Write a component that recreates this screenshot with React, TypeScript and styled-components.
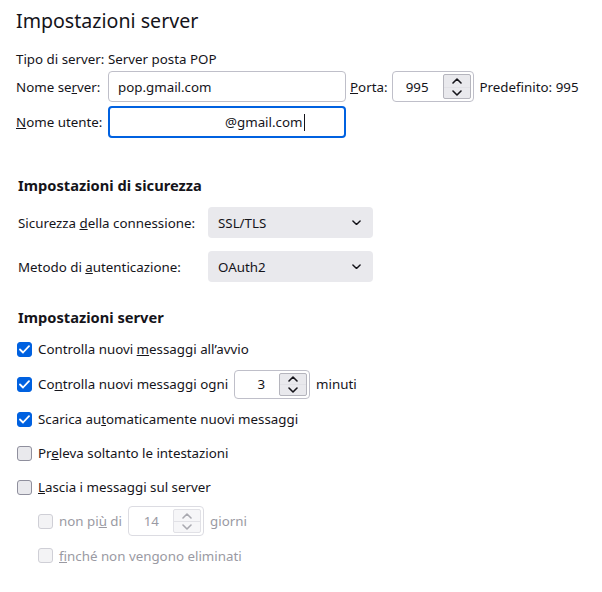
import React from 'react'
import styled, { createGlobalStyle, css } from 'styled-components'

const GlobalStyle = createGlobalStyle`
  html, body {
    margin: 0;
    padding: 0;
    background: #ffffff;
  }
  body {
    font-family: "Noto Sans", "Open Sans", sans-serif;
    font-size: 13.33px;
    color: #15141a;
  }
`

const Page = styled.div`
  padding: 6px 16px 20px 16px;
  width: 602px;
  box-sizing: border-box;
`

const Title = styled.h1`
  font-size: 19.6px;
  font-weight: 400;
  margin: 0 0 14px 0;
  line-height: 30px;
`

const InfoLine = styled.div`
  line-height: 19px;
  margin-bottom: 2px;
`

const ServerGrid = styled.div`
  display: grid;
  grid-template-columns: 92px 238px auto;
  row-gap: 4px;
  align-items: center;
`

const Label = styled.label`
  white-space: nowrap;
`

const TextBox = styled.div<{ $focused?: boolean }>`
  height: 31px;
  box-sizing: border-box;
  border: 1px solid #bfbfc9;
  border-radius: 4px;
  display: flex;
  align-items: center;
  padding: 0 9px;
  ${(p) =>
    p.$focused &&
    css`
      height: 32px;
      border: 2px solid #0061e0;
      padding: 0 8px;
    `}
`

const Hidden = styled.span`
  display: inline-block;
  width: 107px;
`

const Caret = styled.span`
  display: inline-block;
  width: 1px;
  height: 17px;
  background: #15141a;
  margin-left: 1px;
`

const PortCell = styled.div`
  display: flex;
  align-items: center;
  gap: 4px;
  padding-left: 4px;
`

const SpinBox = styled.div<{ $width: number; $height: number; $disabled?: boolean }>`
  width: ${(p) => p.$width}px;
  height: ${(p) => p.$height}px;
  box-sizing: border-box;
  border: 1px solid #bfbfc9;
  border-radius: 4px;
  display: flex;
  align-items: center;
  justify-content: space-between;
  padding: 2px 2px 2px 0;
  ${(p) =>
    p.$disabled &&
    css`
      border-color: #dcdce2;
      color: #9a9aa3;
    `}
`

const SpinValue = styled.span`
  flex: 1;
  text-align: right;
  padding-right: 14px;
`

const SpinButtons = styled.div<{ $disabled?: boolean }>`
  width: 26px;
  align-self: stretch;
  display: grid;
  grid-template-rows: 1fr 1fr;
  border: 1px solid ${(p) => (p.$disabled ? '#e1e1e6' : '#b5b5bd')};
  border-radius: 2px;
  background: ${(p) => (p.$disabled ? '#f6f6f8' : '#e9e9ed')};
  overflow: hidden;
`

const SpinHalf = styled.div<{ $disabled?: boolean }>`
  display: flex;
  align-items: center;
  justify-content: center;
  color: ${(p) => (p.$disabled ? '#a9a9b0' : '#15141a')};
  & + & {
    border-top: 1px solid ${(p) => (p.$disabled ? '#e1e1e6' : '#b5b5bd')};
  }
`

const Aside = styled.span`
  margin-left: 2px;
`

const SectionTitle = styled.h2<{ $top: number }>`
  font-size: 14.67px;
  font-weight: 700;
  margin: ${(p) => p.$top}px 0 0 2px;
  line-height: 20px;
`

const SecurityGrid = styled.div`
  display: grid;
  grid-template-columns: 190px 165px;
  row-gap: 13px;
  align-items: center;
  margin: 12px 0 0 2px;
`

const Select = styled.div`
  height: 31px;
  border-radius: 4px;
  background: #e9e9ed;
  display: flex;
  align-items: center;
  justify-content: space-between;
  padding: 0 12px 0 10px;
`

const Options = styled.div`
  display: flex;
  flex-direction: column;
  margin-top: 5px;
`

const OptionRow = styled.div<{ $indent?: boolean; $disabled?: boolean; $height?: number }>`
  display: flex;
  align-items: center;
  gap: 6px;
  height: ${(p) => p.$height ?? 34}px;
  padding-left: ${(p) => (p.$indent ? 22 : 1)}px;
  color: ${(p) => (p.$disabled ? '#9a9aa3' : 'inherit')};
`

const Check = styled.span<{ $checked?: boolean; $disabled?: boolean }>`
  width: 15px;
  height: 15px;
  box-sizing: border-box;
  border-radius: 3px;
  flex-shrink: 0;
  display: flex;
  align-items: center;
  justify-content: center;
  border: 1px solid #8f8f9d;
  background: #e9e9ed;
  ${(p) =>
    p.$checked &&
    css`
      border-color: #0061e0;
      background: #0061e0;
    `}
  ${(p) =>
    p.$disabled &&
    css`
      border-color: #cfcfd6;
      background: #f3f3f5;
    `}
`

const Chevron = ({ up = false, size = 10 }: { up?: boolean; size?: number }) => (
  <svg width={size} height={size * 0.6} viewBox="0 0 10 6" fill="none">
    <path
      d={up ? 'M1 5L5 1L9 5' : 'M1 1L5 5L9 1'}
      stroke="currentColor"
      strokeWidth="1.6"
      strokeLinecap="round"
      strokeLinejoin="round"
    />
  </svg>
)

const Tick = () => (
  <svg width="11" height="9" viewBox="0 0 11 9" fill="none">
    <path d="M1 4.5L4 7.5L10 1.2" stroke="#ffffff" strokeWidth="1.8" strokeLinecap="round" strokeLinejoin="round" />
  </svg>
)

type SpinProps = {
  value: number
  width: number
  height: number
  disabled?: boolean
}

const Spinner = ({ value, width, height, disabled }: SpinProps) => (
  <SpinBox $width={width} $height={height} $disabled={disabled}>
    <SpinValue>{value}</SpinValue>
    <SpinButtons $disabled={disabled}>
      <SpinHalf $disabled={disabled}>
        <Chevron up />
      </SpinHalf>
      <SpinHalf $disabled={disabled}>
        <Chevron />
      </SpinHalf>
    </SpinButtons>
  </SpinBox>
)

type CheckOptionProps = {
  checked?: boolean
  disabled?: boolean
  indent?: boolean
  height?: number
  children: React.ReactNode
}

const CheckOption = ({ checked, disabled, indent, height, children }: CheckOptionProps) => (
  <OptionRow $indent={indent} $disabled={disabled} $height={height}>
    <Check $checked={checked} $disabled={disabled}>
      {checked && <Tick />}
    </Check>
    {children}
  </OptionRow>
)

export default function App() {
  return (
    <Page>
      <GlobalStyle />
      <Title>Impostazioni server</Title>
      <InfoLine>Tipo di server: Server posta POP</InfoLine>
      <ServerGrid>
        <Label>
          Nome se<u>r</u>ver:
        </Label>
        <TextBox>pop.gmail.com</TextBox>
        <PortCell>
          <Label>
            <u>P</u>orta:
          </Label>
          <Spinner value={995} width={82} height={31} />
          <Aside>Predefinito: 995</Aside>
        </PortCell>
        <Label>
          <u>N</u>ome utente:
        </Label>
        <TextBox $focused>
          <Hidden />
          @gmail.com
          <Caret />
        </TextBox>
      </ServerGrid>

      <SectionTitle $top={37}>Impostazioni di sicurezza</SectionTitle>
      <SecurityGrid>
        <Label>
          Sicurezza <u>d</u>ella connessione:
        </Label>
        <Select>
          SSL/TLS
          <Chevron size={9} />
        </Select>
        <Label>
          Metodo di <u>a</u>utenticazione:
        </Label>
        <Select>
          OAuth2
          <Chevron size={9} />
        </Select>
      </SecurityGrid>

      <SectionTitle $top={25}>Impostazioni server</SectionTitle>
      <Options>
        <CheckOption checked>
          <span>
            Controlla nuovi <u>m</u>essaggi all’avvio
          </span>
        </CheckOption>
        <CheckOption checked height={36}>
          <span>
            Co<u>n</u>trolla nuovi messaggi ogni
          </span>
          <Spinner value={3} width={76} height={29} />
          <span>minuti</span>
        </CheckOption>
        <CheckOption checked>
          <span>
            Scarica au<u>t</u>omaticamente nuovi messaggi
          </span>
        </CheckOption>
        <CheckOption>
          <span>
            Pr<u>e</u>leva soltanto le intestazioni
          </span>
        </CheckOption>
        <CheckOption>
          <span>
            <u>L</u>ascia i messaggi sul server
          </span>
        </CheckOption>
        <CheckOption indent disabled>
          <span>
            non pi<u>ù</u> di
          </span>
          <Spinner value={14} width={76} height={30} disabled />
          <span>giorni</span>
        </CheckOption>
        <CheckOption indent disabled height={35}>
          <span>
            <u>f</u>inché non vengono eliminati
          </span>
        </CheckOption>
      </Options>
    </Page>
  )
}
